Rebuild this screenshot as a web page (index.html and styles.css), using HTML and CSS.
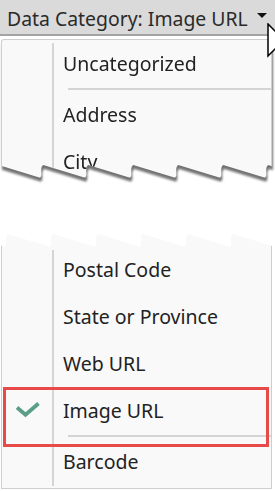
FILE: index.html
```html
<!DOCTYPE html>
<html>
<head>
<meta charset="utf-8">
<link rel="stylesheet" href="styles.css">
</head>
<body>
<div class="topbar">
  <span class="topbar-label">Data Category: Image URL</span>
  <span class="caret"></span>
</div>
<svg class="cursor" width="8" height="40" viewBox="0 0 8 40">
  <path d="M1,1 L1,33 L8.5,25.5 L13.5,36.5 L18,34.5 L13,23.5 L23.5,23.5 Z" fill="#fff" stroke="#000" stroke-width="1.5" stroke-linejoin="miter"/>
</svg>
<div class="tear-shadow">
  <div class="menu menu-upper">
    <div class="item"><span class="icon"></span><span class="label">Uncategorized</span></div>
    <div class="separator"></div>
    <div class="item"><span class="icon"></span><span class="label">Address</span></div>
    <div class="item"><span class="icon"></span><span class="label">City</span></div>
  </div>
</div>
<div class="menu menu-lower">
  <div class="item"><span class="icon"></span><span class="label">Postal Code</span></div>
  <div class="item"><span class="icon"></span><span class="label">State or Province</span></div>
  <div class="item"><span class="icon"></span><span class="label">Web URL</span></div>
  <div class="item item-selected"><span class="icon"><svg class="check" width="26" height="16" viewBox="0 0 26 16"><polyline points="3,5.5 11.5,12.8 24.5,1.5" fill="none" stroke="#5b9e87" stroke-width="3.8"/></svg></span><span class="label">Image URL</span></div>
  <div class="separator"></div>
  <div class="item"><span class="icon"></span><span class="label">Barcode</span></div>
</div>
</body>
</html>
```

FILE: styles.css
```css
* { box-sizing: border-box; }

html, body {
  margin: 0;
  padding: 0;
  background: #ffffff;
}

body {
  width: 275px;
  height: 491px;
  overflow: hidden;
  position: relative;
  font-family: "Noto Sans", "Open Sans", sans-serif;
  font-size: 19.5px;
  color: #222222;
}

.topbar {
  display: flex;
  justify-content: space-between;
  align-items: flex-start;
  height: 36px;
  padding: 4px 8px 0 7px;
  background: #dadada;
  border-bottom: 2px solid #a3a3a3;
  color: #2a2a2a;
  font-size: 19.4px;
}

.topbar-label {
  line-height: 30px;
  white-space: nowrap;
}

.caret {
  width: 0;
  height: 0;
  margin-top: 9px;
  border-left: 5px solid transparent;
  border-right: 5px solid transparent;
  border-top: 5px solid #111111;
}

.cursor {
  position: absolute;
  left: 267px;
  top: 23px;
  z-index: 5;
}

.tear-shadow {
  margin-top: 3px;
  filter: drop-shadow(1px 4px 1px rgba(0, 0, 0, 0.55));
}

.menu {
  margin-left: 1px;
  width: 271px;
  background-color: #f9f9f9;
  background-image: linear-gradient(#d5d5d5, #d5d5d5);
  background-repeat: no-repeat;
  border-left: 1px solid #cfcfcf;
  border-right: 1px solid #cfcfcf;
}

.menu-upper {
  border-top: 1px solid #cfcfcf;
  border-radius: 3px 3px 0 0;
  background-position: 50px 3px;
  background-size: 2px 100%;
  clip-path: path("M-3,-5 L-3,126 L-2.7,126 L38.3,138.5 Q40.8,139 40.3,133 Q39.8,127 42.3,126 L83.3,138.5 Q85.8,139 85.3,133 Q84.8,127 87.3,126 L128.3,138.5 Q130.8,139 130.3,133 Q129.8,127 132.3,126 L173.3,138.5 Q175.8,139 175.3,133 Q174.8,127 177.3,126 L218.3,138.5 Q220.8,139 220.3,133 Q219.8,127 222.3,126 L263.3,138.5 Q265.8,139 265.3,133 Q264.8,127 267.3,126 L308.3,138.5 L320,138.5 L320,-5 Z");
}

.menu-lower {
  margin-top: 45px;
  padding-top: 16px;
  padding-bottom: 3px;
  border-bottom: 1px solid #cfcfcf;
  background-position: 50px 20px;
  background-size: 2px calc(100% - 22px);
  clip-path: path("M-40,4 L-38,4 L3,16.5 Q5.5,17 5,11 Q4.5,5 7,4 L48,16.5 Q50.5,17 50,11 Q49.5,5 52,4 L93,16.5 Q95.5,17 95,11 Q94.5,5 97,4 L138,16.5 Q140.5,17 140,11 Q139.5,5 142,4 L183,16.5 Q185.5,17 185,11 Q184.5,5 187,4 L228,16.5 Q230.5,17 230,11 Q229.5,5 232,4 L273,16.5 Q275.5,17 275,11 Q274.5,5 277,4 L300,4 L300,300 L-40,300 Z");
}

.item {
  display: grid;
  grid-template-columns: 50px 1fr;
  height: 47px;
  line-height: 47px;
  white-space: nowrap;
}

.icon {
  display: flex;
  align-items: center;
  justify-content: center;
}

.check {
  display: block;
  margin-top: -2px;
}

.label {
  padding-left: 11px;
}

.separator {
  height: 2px;
  margin: 1px 0 1px 66px;
  background: #d4d4d4;
}

.item-selected {
  position: relative;
}

.item-selected::after {
  content: "";
  position: absolute;
  left: 1px;
  right: 2px;
  top: 0;
  height: 54px;
  border: 3px solid #e84a4a;
  z-index: 2;
}
```
